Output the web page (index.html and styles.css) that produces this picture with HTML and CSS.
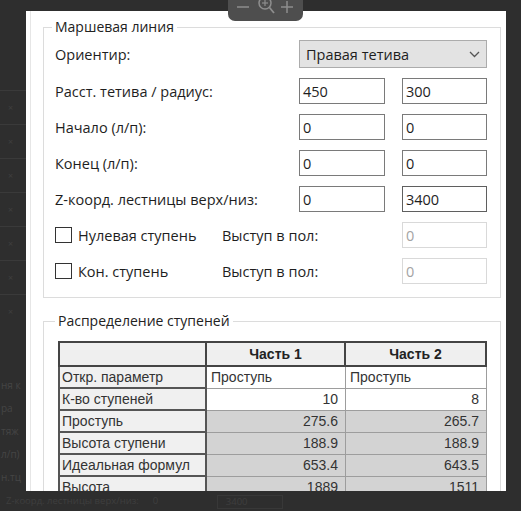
FILE: index.html
```html
<!DOCTYPE html>
<html lang="ru">
<head>
<meta charset="utf-8">
<title>Маршевая линия</title>
<link rel="stylesheet" href="styles.css">
</head>
<body>
<div class="screen">
  <div class="side">
    <div class="side-row"><span class="side-x">×</span></div>
    <div class="side-row"><span class="side-x">×</span></div>
    <div class="side-row"><span class="side-x">×</span></div>
    <div class="side-row"><span class="side-x">×</span></div>
    <div class="side-row"><span class="side-x">×</span></div>
    <div class="side-row"><span class="side-x">×</span></div>
    <div class="side-row"><span class="side-x">×</span></div>
    <div class="side-text">
      <span>ня к</span>
      <span>ра</span>
      <span>тяж</span>
      <span>л/п)</span>
      <span>н.тц</span>
    </div>
  </div>

  <div class="panel">
    <div class="panel-inner">
      <fieldset class="group group-march">
        <legend>Маршевая линия</legend>
        <div class="form">
          <div class="lbl">Ориентир:</div>
          <div class="combo">
            <span>Правая тетива</span>
            <svg class="chev" width="11" height="7" viewBox="0 0 11 7"><polyline points="1,1 5.5,5.5 10,1" fill="none" stroke="#555" stroke-width="1.3"/></svg>
          </div>

          <div class="lbl">Расст. тетива / радиус:</div>
          <div class="inp">450</div>
          <div class="inp">300</div>

          <div class="lbl">Начало (л/п):</div>
          <div class="inp">0</div>
          <div class="inp">0</div>

          <div class="lbl">Конец (л/п):</div>
          <div class="inp">0</div>
          <div class="inp">0</div>

          <div class="lbl">Z-коорд. лестницы верх/низ:</div>
          <div class="inp">0</div>
          <div class="inp inp-dark">3400</div>

          <div class="lbl lbl-check">
            <span class="check"><span class="box"></span>Нулевая ступень</span>
            <span>Выступ в пол:</span>
          </div>
          <div class="inp inp-off">0</div>

          <div class="lbl lbl-check">
            <span class="check"><span class="box"></span>Кон. ступень</span>
            <span>Выступ в пол:</span>
          </div>
          <div class="inp inp-off">0</div>
        </div>
      </fieldset>

      <fieldset class="group group-dist">
        <legend>Распределение ступеней</legend>
        <table class="steps">
          <colgroup><col class="c1"><col class="c2"><col class="c3"></colgroup>
          <thead>
            <tr><th class="corner"></th><th>Часть 1</th><th>Часть 2</th></tr>
          </thead>
          <tbody>
            <tr><th class="rh">Откр. параметр</th><td class="txt">Проступь</td><td class="txt">Проступь</td></tr>
            <tr><th class="rh">К-во ступеней</th><td>10</td><td>8</td></tr>
            <tr class="ro"><th class="rh">Проступь</th><td>275.6</td><td>265.7</td></tr>
            <tr class="ro"><th class="rh">Высота ступени</th><td>188.9</td><td>188.9</td></tr>
            <tr class="ro"><th class="rh">Идеальная формул</th><td>653.4</td><td>643.5</td></tr>
            <tr class="ro"><th class="rh">Высота</th><td>1889</td><td>1511</td></tr>
          </tbody>
        </table>
      </fieldset>
    </div>
  </div>

  <div class="bottom">
    <span class="b-label">Z-коорд. лестницы верх/низ:</span>
    <span class="b-val">0</span>
    <span class="b-box">3400</span>
  </div>

  <div class="zoombar">
    <svg width="75" height="21" viewBox="0 0 75 21">
      <line x1="9" y1="7" x2="21" y2="7" stroke="#8e8e8e" stroke-width="1.5"/>
      <circle cx="37" cy="3" r="6" fill="none" stroke="#8e8e8e" stroke-width="1.5"/>
      <line x1="41.5" y1="7.5" x2="46" y2="13" stroke="#8e8e8e" stroke-width="1.8"/>
      <line x1="34" y1="3" x2="40" y2="3" stroke="#8e8e8e" stroke-width="1.2"/>
      <line x1="37" y1="0" x2="37" y2="6" stroke="#8e8e8e" stroke-width="1.2"/>
      <line x1="53" y1="7" x2="65" y2="7" stroke="#8e8e8e" stroke-width="1.5"/>
      <line x1="59" y1="1" x2="59" y2="13" stroke="#8e8e8e" stroke-width="1.5"/>
    </svg>
  </div>
</div>
</body>
</html>
```
FILE: styles.css
```css
* { box-sizing: border-box; }

html, body {
  margin: 0;
  padding: 0;
}

body {
  width: 521px;
  height: 511px;
  overflow: hidden;
  background: #2e2e2e;
  font-family: "Open Sans", "Noto Sans", sans-serif;
}

.screen {
  position: relative;
  width: 521px;
  height: 511px;
  display: grid;
  grid-template-columns: 26px 480px 15px;
  grid-template-rows: 11px 480px 20px;
}

/* left, partially hidden application behind the dialog */
.side {
  grid-column: 1;
  grid-row: 1 / 3;
  padding-top: 90px;
  overflow: hidden;
  display: flex;
  flex-direction: column;
}

.side-row {
  height: 34px;
  border-top: 1px solid #3a3a3a;
  display: flex;
  align-items: center;
  padding-left: 8px;
}

.side-x {
  color: #3f3f3f;
  font-size: 9px;
}

.side-text {
  margin-top: 50px;
  display: flex;
  flex-direction: column;
  gap: 9px;
  font-size: 10px;
  color: #454545;
  white-space: nowrap;
  padding-left: 1px;
}

/* dialog panel */
.panel {
  grid-column: 2;
  grid-row: 2;
  background: #fff;
  overflow: hidden;
  padding-left: 4px;
}

.panel-inner {
  height: 100%;
  border-left: 1px solid #e6e6e6;
  padding: 7px 5px 0 12px;
}

.group {
  margin: 0;
  border: 1px solid #dcdcdc;
  min-width: 0;
}

.group legend {
  font-size: 14px;
  line-height: 18px;
  padding: 0 3px;
  margin-left: -3px;
  color: #222;
}

.group-march {
  padding: 4px 13px 13px 11px;
}

.group-dist {
  margin-top: 14px;
  padding: 11px 13px 20px 14px;
}

.form {
  display: grid;
  grid-template-columns: 227px 86px 85px;
  grid-template-rows: 28px repeat(6, 26px);
  column-gap: 17px;
  row-gap: 10px;
  align-items: center;
  color: #1e1e1e;
  font-size: 14.5px;
}

.lbl {
  white-space: nowrap;
}

.lbl-check {
  grid-column: 1 / 3;
  display: flex;
  align-items: center;
}

.check {
  width: 167px;
  display: flex;
  align-items: center;
  gap: 6px;
}

.box {
  width: 17px;
  height: 16px;
  border: 1px solid #333;
  background: #fff;
}

.combo {
  grid-column: 2 / 4;
  height: 28px;
  background: #e3e3e3;
  border: 1px solid #acacac;
  display: flex;
  align-items: center;
  justify-content: space-between;
  padding: 0 6px 0 6px;
}

.chev {
  display: block;
}

.inp {
  height: 26px;
  border: 1px solid #7a7a7a;
  background: #fff;
  padding: 0 3px;
  display: flex;
  align-items: center;
}

.inp-dark {
  border-color: #5f5f5f;
}

.inp-off {
  border-color: #d9d9d9;
  color: #a3a3a3;
}

/* data grid */
.steps {
  border-collapse: separate;
  border-spacing: 0;
  table-layout: fixed;
  width: 429px;
  font-family: "Liberation Sans", Arial, sans-serif;
  font-size: 14px;
  color: #333;
}

.c1 { width: 149px; }
.c2 { width: 139px; }
.c3 { width: 141px; }

.steps thead th {
  background: #efefef;
  font-weight: bold;
  color: #222;
  line-height: 18px;
  padding: 2px 4px;
  border-top: 2px solid #444;
  border-bottom: 2px solid #444;
  border-right: 2px solid #444;
  text-align: center;
}

.steps thead th.corner {
  border-left: 2px solid #444;
}

.steps th.rh {
  background: #f0f0f0;
  font-weight: normal;
  text-align: left;
  line-height: 17px;
  padding: 2px 2px 1px 2px;
  border-left: 2px solid #555;
  border-right: 2px solid #555;
  border-bottom: 2px solid #555;
  white-space: nowrap;
  overflow: hidden;
}

.steps td {
  background: #fff;
  text-align: right;
  line-height: 17px;
  padding: 2px 7px 2px 4px;
  border-right: 1px solid #9d9d9d;
  border-bottom: 1px solid #9d9d9d;
  white-space: nowrap;
}

.steps td.txt {
  text-align: left;
}

.steps tr.ro td {
  background: #d3d3d3;
}

/* bottom strip of the app behind */
.bottom {
  grid-column: 1 / 4;
  grid-row: 3;
  display: flex;
  align-items: flex-start;
  gap: 14px;
  padding: 4px 0 0 6px;
  font-size: 9.5px;
  line-height: 12px;
  color: #3e3e3e;
  white-space: nowrap;
  overflow: hidden;
}

.b-label { flex: none; }
.b-val { flex: none; width: 50px; }
.b-box {
  flex: none;
  width: 66px;
  border: 1px solid #383838;
  padding-left: 8px;
}

/* viewer zoom controls overlay */
.zoombar {
  position: absolute;
  left: 228px;
  top: 0;
  width: 75px;
  height: 21px;
  background: #4e4e4e;
  border-radius: 0 0 7px 7px;
}

.zoombar svg { display: block; }
```
